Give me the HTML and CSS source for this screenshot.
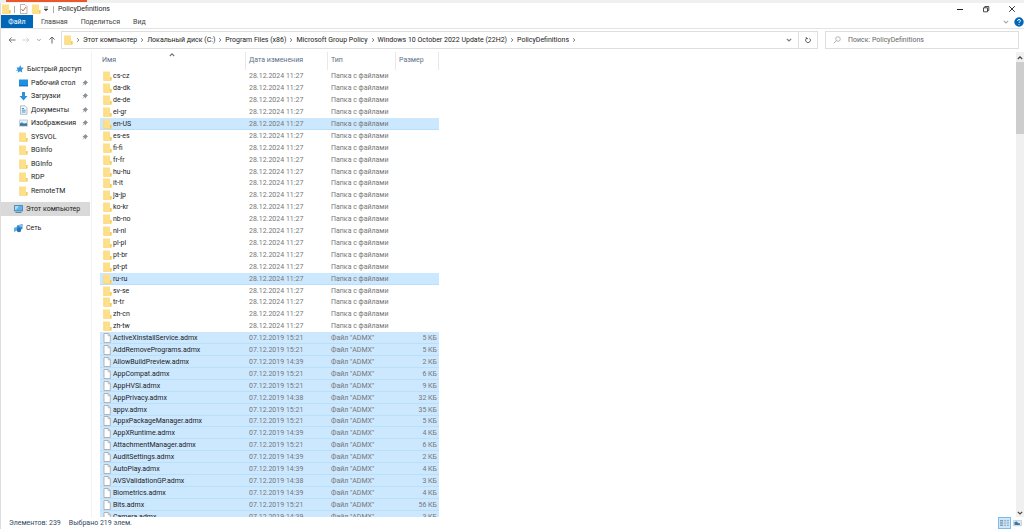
FILE: index.html
```html
<!DOCTYPE html>
<html lang="ru">
<head>
<meta charset="utf-8">
<title>PolicyDefinitions</title>
<link rel="stylesheet" href="styles.css">
</head>
<body>
<svg class="sprite" aria-hidden="true">
  <symbol id="folder" viewBox="0 0 9 10"><path d="M0.5 0.5H7V6H8.5V9.5H0.5Z" fill="#ffe08a"/><path d="M7 6H8.5V9.5H0.5V9H7Z" fill="#f3cb5c"/><path d="M0.5 0.5H1.2V9.5H0.5Z" fill="#f7d475"/></symbol>
  <symbol id="file" viewBox="0 0 9 10"><path d="M1 0.5H5.3L7.3 2.5V9.5H1Z" fill="#fff" stroke="#96999c" stroke-width=".7"/><path d="M5.1 0.6V2.7H7.2" fill="none" stroke="#96999c" stroke-width=".6"/></symbol>
  <symbol id="pin" viewBox="0 0 8 8"><path d="M4.2 1L7 3.6 6.2 4 5 5.6 4.8 6.4 3.3 5 1 7.2 2.9 4.6 1.4 3.2 2.4 3 3.9 1.8Z" fill="#8c9299"/></symbol>
  <symbol id="chev" viewBox="0 0 6 6"><path d="M2 1.2L4 3 2 4.8" fill="none" stroke="#777" stroke-width=".9"/></symbol>
  <symbol id="down" viewBox="0 0 8 8"><path d="M1.8 2.8L4 5 6.2 2.8" fill="none" stroke="currentColor" stroke-width="1.1"/></symbol>
  <symbol id="up" viewBox="0 0 8 8"><path d="M1.8 5L4 2.8 6.2 5" fill="none" stroke="currentColor" stroke-width="1.1"/></symbol>
</svg>
<div class="strip"><span class="strip-mark"></span></div>
<div class="window">
  <header class="titlebar">
    <svg class="ico"><use href="#folder"/></svg>
    <span class="tick"></span>
    <button class="plain quick" aria-label="Свойства"><svg class="ico" viewBox="0 0 9 10"><path d="M1.5 .5H6L8 2.5V9.5H1.5Z" fill="#fff" stroke="#999" stroke-width=".7"/><path d="M2.5 5L4 7 7 3" fill="none" stroke="#e8603c" stroke-width="1"/></svg></button>
    <button class="plain quick" aria-label="Новая папка"><svg class="ico"><use href="#folder"/></svg></button>
    <button class="plain more" aria-label="Настройка панели"><svg class="small" viewBox="0 0 8 8"><path d="M2 2H6M2 4H6L4 6Z" fill="#444" stroke="#444" stroke-width=".6"/></svg></button>
    <span class="tick"></span>
    <h1 class="title">PolicyDefinitions</h1>
    <div class="controls">
      <button class="plain" aria-label="Свернуть"><svg class="small" viewBox="0 0 8 8"><path d="M1 4.5H7" stroke="#222" stroke-width="1"/></svg></button>
      <button class="plain" aria-label="Восстановить"><svg class="small" viewBox="0 0 8 8"><path d="M1.5 2.8H5.5V6.8H1.5ZM2.8 2.8V1.5H6.8V5.5H5.5" fill="none" stroke="#222" stroke-width=".8"/></svg></button>
      <button class="plain" aria-label="Закрыть"><svg class="small" viewBox="0 0 8 8"><path d="M1.2 1.2L6.8 6.8M6.8 1.2L1.2 6.8" stroke="#222" stroke-width=".9"/></svg></button>
    </div>
  </header>
  <nav class="tabs">
    <button class="tab tab-file">Файл</button>
    <button class="tab">Главная</button>
    <button class="tab">Поделиться</button>
    <button class="tab">Вид</button>
    <div class="help">
      <button class="plain faint" aria-label="Развернуть ленту"><svg class="small"><use href="#down"/></svg></button>
      <button class="plain" aria-label="Справка"><svg class="ico-help" viewBox="0 0 10 10"><circle cx="5" cy="5" r="4.7" fill="#0067b8"/><path d="M3.5 3.9C3.5 2 6.5 2 6.5 3.9C6.5 4.8 5 4.9 5 6M5 7V7.8" fill="none" stroke="#fff" stroke-width="1"/></svg></button>
    </div>
  </nav>
  <div class="address-row">
    <div class="arrows">
      <button class="plain" aria-label="Назад"><svg class="small" viewBox="0 0 8 8"><path d="M7.5 4H1M3.6 1.4L1 4 3.6 6.6" fill="none" stroke="#666" stroke-width=".9"/></svg></button>
      <button class="plain" aria-label="Вперёд"><svg class="small" viewBox="0 0 8 8"><path d="M.5 4H7M4.4 1.4L7 4 4.4 6.6" fill="none" stroke="#ccc" stroke-width=".9"/></svg></button>
      <button class="plain" aria-label="Последние"><svg class="tiny"><use href="#down"/></svg></button>
      <button class="plain" aria-label="Вверх"><svg class="small" viewBox="0 0 8 8"><path d="M4 7.5V1M1.4 3.6L4 1 6.6 3.6" fill="none" stroke="#666" stroke-width="1"/></svg></button>
    </div>
    <div class="address">
      <svg class="ico"><use href="#folder"/></svg>
      <svg class="sep"><use href="#chev"/></svg><a href="#">Этот компьютер</a>
      <svg class="sep"><use href="#chev"/></svg><a href="#">Локальный диск (C:)</a>
      <svg class="sep"><use href="#chev"/></svg><a href="#">Program Files (x86)</a>
      <svg class="sep"><use href="#chev"/></svg><a href="#">Microsoft Group Policy</a>
      <svg class="sep"><use href="#chev"/></svg><a href="#">Windows 10 October 2022 Update (22H2)</a>
      <svg class="sep"><use href="#chev"/></svg><a href="#">PolicyDefinitions</a>
      <svg class="sep"><use href="#chev"/></svg>
      <button class="plain drop" aria-label="Предыдущие расположения"><svg class="small"><use href="#down"/></svg></button>
      <button class="plain refresh" aria-label="Обновить"><svg class="small" viewBox="0 0 8 8"><path d="M5.6 2.4A2.4 2.4 0 1 1 2.6 2.3M2.2 1V2.6H4" fill="none" stroke="#555" stroke-width=".9"/></svg></button>
    </div>
    <label class="search">
      <svg class="small" viewBox="0 0 8 8"><circle cx="5" cy="3" r="2.3" fill="none" stroke="#999" stroke-width=".7"/><path d="M3.3 4.7L.8 7.2" stroke="#999" stroke-width=".8"/></svg>
      <input type="search" placeholder="Поиск: PolicyDefinitions" aria-label="Поиск: PolicyDefinitions">
    </label>
  </div>
  <div class="body">
    <nav class="side">
      <ul class="tree">
        <li class="root"><svg class="ico" viewBox="0 0 9 10"><path d="M5.2 1L6.2 3.4 8.8 3.8 6.8 5.8 7.2 8.6 5 7.2 2.6 8.8 3.2 6.6 .4 7 2.6 5.4 1.6 3.6 4.2 3.4Z" fill="#2f93dc"/></svg><a href="#">Быстрый доступ</a></li>
        <li><svg class="ico" viewBox="0 0 9 10"><path d="M0 1.5H9V8H0Z" fill="#1e90e4"/><path d="M0 7.4H9V8.4H0Z" fill="#0d64b0"/></svg><a href="#">Рабочий стол</a><svg class="pin"><use href="#pin"/></svg></li>
        <li><svg class="ico" viewBox="0 0 9 10"><path d="M3 1H6V5H8.5L4.5 9.5.5 5H3Z" fill="#2e8fdb"/></svg><a href="#">Загрузки</a><svg class="pin"><use href="#pin"/></svg></li>
        <li><svg class="ico" viewBox="0 0 9 10"><path d="M1.5.8H6L8 2.8V9.3H1.5Z" fill="#f4f8fb" stroke="#93a5b3" stroke-width=".7"/><path d="M2.8 3.5H5M2.8 5.2H6.6M2.8 7H6.6" stroke="#428fcb" stroke-width="1"/></svg><a href="#">Документы</a><svg class="pin"><use href="#pin"/></svg></li>
        <li><svg class="ico" viewBox="0 0 9 10"><path d="M.4 2H8.6V8.2H.4Z" fill="#e5f1f9" stroke="#a2afb8" stroke-width=".6"/><path d="M1 5L3 4.3 5 5.4 8 4.8V7.5H1Z" fill="#4d8fbd"/><path d="M1 6.4H8V7.6H1Z" fill="#315f84"/></svg><a href="#">Изображения</a><svg class="pin"><use href="#pin"/></svg></li>
        <li><svg class="ico"><use href="#folder"/></svg><a href="#">SYSVOL</a><svg class="pin"><use href="#pin"/></svg></li>
        <li><svg class="ico"><use href="#folder"/></svg><a href="#">BGInfo</a></li>
        <li><svg class="ico"><use href="#folder"/></svg><a href="#">BGInfo</a></li>
        <li><svg class="ico"><use href="#folder"/></svg><a href="#">RDP</a></li>
        <li><svg class="ico"><use href="#folder"/></svg><a href="#">RemoteTM</a></li>
      </ul>
      <ul class="tree places">
        <li class="place current"><svg class="ico" viewBox="0 0 9 10"><path d="M.4 1.5H8.6V7H.4Z" fill="#55b5f0" stroke="#3c6f96" stroke-width=".7"/><path d="M1 2L5 2 2 6H1Z" fill="#a7dcfb"/><path d="M1.5 8.5H7.5" stroke="#5d7c94" stroke-width=".9"/></svg><a href="#">Этот компьютер</a></li>
        <li class="place"><svg class="ico" viewBox="0 0 9 10"><path d="M0 5L4 3V7L0 9Z" fill="#5aaee8"/><path d="M3 2.5L8.5 1V6L3 7.5Z" fill="#3c8fce"/><circle cx="5" cy="7" r="2.2" fill="#2a71ae"/><path d="M4 2.8L7.8 1.8V4Z" fill="#8fd0f7"/></svg><a href="#">Сеть</a></li>
      </ul>
    </nav>
    <main class="content">
      <svg class="sort"><use href="#up"/></svg>
      <table class="files">
        <colgroup><col class="c-name"><col class="c-date"><col class="c-type"><col class="c-size"></colgroup>
        <thead><tr><th>Имя</th><th>Дата изменения</th><th>Тип</th><th>Размер</th></tr></thead>
        <tbody>
          <tr><td><svg class="ico"><use href="#folder"/></svg>cs-cz</td><td>28.12.2024 11:27</td><td>Папка с файлами</td><td></td></tr>
          <tr><td><svg class="ico"><use href="#folder"/></svg>da-dk</td><td>28.12.2024 11:27</td><td>Папка с файлами</td><td></td></tr>
          <tr><td><svg class="ico"><use href="#folder"/></svg>de-de</td><td>28.12.2024 11:27</td><td>Папка с файлами</td><td></td></tr>
          <tr><td><svg class="ico"><use href="#folder"/></svg>el-gr</td><td>28.12.2024 11:27</td><td>Папка с файлами</td><td></td></tr>
          <tr class="sel"><td><svg class="ico"><use href="#folder"/></svg>en-US</td><td>28.12.2024 11:27</td><td>Папка с файлами</td><td></td></tr>
          <tr><td><svg class="ico"><use href="#folder"/></svg>es-es</td><td>28.12.2024 11:27</td><td>Папка с файлами</td><td></td></tr>
          <tr><td><svg class="ico"><use href="#folder"/></svg>fi-fi</td><td>28.12.2024 11:27</td><td>Папка с файлами</td><td></td></tr>
          <tr><td><svg class="ico"><use href="#folder"/></svg>fr-fr</td><td>28.12.2024 11:27</td><td>Папка с файлами</td><td></td></tr>
          <tr><td><svg class="ico"><use href="#folder"/></svg>hu-hu</td><td>28.12.2024 11:27</td><td>Папка с файлами</td><td></td></tr>
          <tr><td><svg class="ico"><use href="#folder"/></svg>it-it</td><td>28.12.2024 11:27</td><td>Папка с файлами</td><td></td></tr>
          <tr><td><svg class="ico"><use href="#folder"/></svg>ja-jp</td><td>28.12.2024 11:27</td><td>Папка с файлами</td><td></td></tr>
          <tr><td><svg class="ico"><use href="#folder"/></svg>ko-kr</td><td>28.12.2024 11:27</td><td>Папка с файлами</td><td></td></tr>
          <tr><td><svg class="ico"><use href="#folder"/></svg>nb-no</td><td>28.12.2024 11:27</td><td>Папка с файлами</td><td></td></tr>
          <tr><td><svg class="ico"><use href="#folder"/></svg>nl-nl</td><td>28.12.2024 11:27</td><td>Папка с файлами</td><td></td></tr>
          <tr><td><svg class="ico"><use href="#folder"/></svg>pl-pl</td><td>28.12.2024 11:27</td><td>Папка с файлами</td><td></td></tr>
          <tr><td><svg class="ico"><use href="#folder"/></svg>pt-br</td><td>28.12.2024 11:27</td><td>Папка с файлами</td><td></td></tr>
          <tr><td><svg class="ico"><use href="#folder"/></svg>pt-pt</td><td>28.12.2024 11:27</td><td>Папка с файлами</td><td></td></tr>
          <tr class="sel"><td><svg class="ico"><use href="#folder"/></svg>ru-ru</td><td>28.12.2024 11:27</td><td>Папка с файлами</td><td></td></tr>
          <tr><td><svg class="ico"><use href="#folder"/></svg>sv-se</td><td>28.12.2024 11:27</td><td>Папка с файлами</td><td></td></tr>
          <tr><td><svg class="ico"><use href="#folder"/></svg>tr-tr</td><td>28.12.2024 11:27</td><td>Папка с файлами</td><td></td></tr>
          <tr><td><svg class="ico"><use href="#folder"/></svg>zh-cn</td><td>28.12.2024 11:27</td><td>Папка с файлами</td><td></td></tr>
          <tr><td><svg class="ico"><use href="#folder"/></svg>zh-tw</td><td>28.12.2024 11:27</td><td>Папка с файлами</td><td></td></tr>
          <tr class="sel"><td><svg class="ico"><use href="#file"/></svg>ActiveXInstallService.admx</td><td>07.12.2019 15:21</td><td>Файл "ADMX"</td><td>5 КБ</td></tr>
          <tr class="sel"><td><svg class="ico"><use href="#file"/></svg>AddRemovePrograms.admx</td><td>07.12.2019 15:21</td><td>Файл "ADMX"</td><td>5 КБ</td></tr>
          <tr class="sel"><td><svg class="ico"><use href="#file"/></svg>AllowBuildPreview.admx</td><td>07.12.2019 14:39</td><td>Файл "ADMX"</td><td>2 КБ</td></tr>
          <tr class="sel"><td><svg class="ico"><use href="#file"/></svg>AppCompat.admx</td><td>07.12.2019 15:21</td><td>Файл "ADMX"</td><td>6 КБ</td></tr>
          <tr class="sel"><td><svg class="ico"><use href="#file"/></svg>AppHVSI.admx</td><td>07.12.2019 15:21</td><td>Файл "ADMX"</td><td>9 КБ</td></tr>
          <tr class="sel"><td><svg class="ico"><use href="#file"/></svg>AppPrivacy.admx</td><td>07.12.2019 14:38</td><td>Файл "ADMX"</td><td>32 КБ</td></tr>
          <tr class="sel"><td><svg class="ico"><use href="#file"/></svg>appv.admx</td><td>07.12.2019 15:21</td><td>Файл "ADMX"</td><td>35 КБ</td></tr>
          <tr class="sel"><td><svg class="ico"><use href="#file"/></svg>AppxPackageManager.admx</td><td>07.12.2019 15:21</td><td>Файл "ADMX"</td><td>5 КБ</td></tr>
          <tr class="sel"><td><svg class="ico"><use href="#file"/></svg>AppXRuntime.admx</td><td>07.12.2019 14:39</td><td>Файл "ADMX"</td><td>4 КБ</td></tr>
          <tr class="sel"><td><svg class="ico"><use href="#file"/></svg>AttachmentManager.admx</td><td>07.12.2019 15:21</td><td>Файл "ADMX"</td><td>6 КБ</td></tr>
          <tr class="sel"><td><svg class="ico"><use href="#file"/></svg>AuditSettings.admx</td><td>07.12.2019 14:39</td><td>Файл "ADMX"</td><td>2 КБ</td></tr>
          <tr class="sel"><td><svg class="ico"><use href="#file"/></svg>AutoPlay.admx</td><td>07.12.2019 14:39</td><td>Файл "ADMX"</td><td>4 КБ</td></tr>
          <tr class="sel"><td><svg class="ico"><use href="#file"/></svg>AVSValidationGP.admx</td><td>07.12.2019 14:38</td><td>Файл "ADMX"</td><td>3 КБ</td></tr>
          <tr class="sel"><td><svg class="ico"><use href="#file"/></svg>Biometrics.admx</td><td>07.12.2019 14:39</td><td>Файл "ADMX"</td><td>4 КБ</td></tr>
          <tr class="sel"><td><svg class="ico"><use href="#file"/></svg>Bits.admx</td><td>07.12.2019 15:21</td><td>Файл "ADMX"</td><td>56 КБ</td></tr>
          <tr class="sel"><td><svg class="ico"><use href="#file"/></svg>Camera.admx</td><td>07.12.2019 14:39</td><td>Файл "ADMX"</td><td>3 КБ</td></tr>
        </tbody>
      </table>
    </main>
    <div class="scrollbar">
      <svg class="small"><use href="#up"/></svg>
      <div class="track"><div class="thumb"></div></div>
      <svg class="small"><use href="#down"/></svg>
    </div>
  </div>
  <footer class="status">
    <span>Элементов: 239</span>
    <span>Выбрано 219 элем.</span>
    <div class="views">
      <button class="plain view active" aria-label="Таблица"><svg class="ico" viewBox="0 0 10 10"><path d="M0 2.5H3.5M0 5H3.5M0 7.5H3.5" stroke="#8b9ba6" stroke-width="1.4"/><path d="M4.5 2.5H6.8M7.6 2.5H10M4.5 5H6.8M7.6 5H10M4.5 7.5H6.8M7.6 7.5H10" stroke="#718797" stroke-width=".8"/></svg></button>
      <button class="plain view" aria-label="Крупные значки"><svg class="ico" viewBox="0 0 9 10"><path d="M.5 2.5H8.5V7.8H.5Z" fill="#d7ebf8" stroke="#b5c0c8" stroke-width=".6"/><path d="M1.5 4L4 3.6 5 5 7 5.4V7H1.5Z" fill="#41759d"/></svg></button>
    </div>
  </footer>
</div>
</body>
</html>
```
FILE: styles.css
```css
* { box-sizing: border-box; }

body {
  margin: 0;
  height: 100vh;
  display: flex;
  flex-direction: column;
  overflow: hidden;
  background: #fff;
  color: #222;
  font: 7px/12px Roboto, "Open Sans", sans-serif;
}

.sprite { position: absolute; width: 0; height: 0; }

.strip { flex: none; height: 3px; background: #f0f0f0; padding-left: 6px; }
.strip-mark { display: block; width: 81px; height: 2px; background: #e8582c; }

.window {
  flex: 1;
  min-height: 0;
  display: flex;
  flex-direction: column;
  border-left: 1px solid #dcdcdc;
}

button, input { font: inherit; color: inherit; }
.plain {
  display: flex;
  align-items: center;
  justify-content: center;
  padding: 0;
  border: 0;
  background: none;
}
a { color: inherit; text-decoration: none; white-space: nowrap; }
svg { flex: none; display: block; }
.ico { width: 9px; height: 10px; }
.small { width: 8px; height: 8px; }
.tiny { width: 6px; height: 6px; }
.ico-help { width: 10px; height: 10px; }

.titlebar { flex: none; height: 12px; display: flex; align-items: center; padding-left: 1px; }
.tick { width: 1px; height: 7px; margin-left: 3px; background: #aaa; }
.quick { margin-left: 4px; }
.quick + .quick { margin-left: 4px; }
.more { margin-left: 1px; }
.title { margin: 0; padding-left: 4px; font-size: 7px; font-weight: 400; color: #222; }
.controls { margin-left: auto; display: flex; gap: 18px; padding-right: 8px; }

.tabs { flex: none; height: 14px; display: flex; border-bottom: 1px solid #e3e3e3; }
.tab { border: 0; padding: 0; margin-left: 13px; background: none; color: #444; }
.tab-file { width: 32px; margin: 0 -5px 0 0; background: #0067b8; color: #fff; }
.help { margin-left: auto; display: flex; gap: 4px; }
.faint { color: #aaa; }

.address-row { flex: none; height: 23px; padding: 2px 5px 3px 7px; display: flex; }
.arrows { display: flex; align-items: center; gap: 6px; width: 53px; color: #888; }
.address { flex: 1; display: flex; align-items: center; border: 1px solid #dedede; padding-left: 2px; }
.sep { width: 6px; height: 6px; margin: 0 2px; }
.drop { margin-left: auto; width: 18px; color: #777; }
.refresh { width: 19px; align-self: stretch; border-left: 1px solid #dedede; }
.search {
  flex: 0 1 194px;
  margin-left: 7px;
  padding-left: 7px;
  display: flex;
  align-items: center;
  gap: 7px;
  border: 1px solid #dedede;
}
.search input { flex: 1; min-width: 0; padding: 0; border: 0; outline: 0; background: none; }
.search input::placeholder { color: #666; opacity: 1; }

.body { flex: 1; min-height: 0; display: flex; }
.side { flex: none; width: 91px; padding-top: 10px; border-right: 1px solid #f2f2f2; }
.tree { margin: 0; padding: 0; list-style: none; }
.tree li { height: 13px; display: flex; align-items: center; gap: 3px; padding-left: 18px; padding-right: 2px; }
.tree li:nth-child(odd) { height: 14px; }
.tree .root { padding-left: 14px; }
.pin { width: 8px; height: 8px; margin-left: auto; }
.places { display: grid; gap: 5px; padding-top: 5px; }
.tree .place { padding-left: 13px; margin-right: 1px; }
.current { background: #d9d9d9; }

.content { flex: 1; min-width: 0; overflow: hidden; position: relative; padding-left: 8px; }
.sort { position: absolute; left: 76px; top: -1px; width: 8px; height: 8px; color: #777; }
.files { width: 339px; table-layout: fixed; border-collapse: separate; border-spacing: 0; color: #777; }
.c-name { width: 146px; }
.c-date { width: 82px; }
.c-type { width: 68px; }
.c-size { width: 43px; }
.files th {
  height: 18px;
  padding: 0 0 2px 3px;
  font-weight: 400;
  text-align: left;
  color: #5d7089;
  border-right: 1px solid #e8e8e8;
}
.files th:first-child { padding-left: 2px; }
.files td { height: 12px; padding: 0 0 0 3px; line-height: 11px; white-space: nowrap; }
.files tr:nth-child(10n) td { height: 11px; }
.files td:first-child { color: #222; }
.files td:last-child { text-align: right; padding-right: 2px; }
.files td .ico { display: inline-block; vertical-align: top; margin-right: 1px; }
.sel { background: #cce8ff; box-shadow: inset 0 -1px #bcdff9; }

.scrollbar { flex: none; width: 8px; display: flex; flex-direction: column; background: #f0f0f0; color: #444; padding-top: 2px; }
.track { flex: 1; }
.thumb { height: 16%; background: #cdcdcd; }

.status { flex: none; height: 12px; display: flex; align-items: center; gap: 8px; padding-left: 8px; color: #33475f; }
.views { margin-left: auto; display: flex; gap: 1px; padding-right: 1px; }
.view { width: 11px; height: 12px; }
.active { width: 13px; border: 1px solid #7abdec; background: #cce8ff; }
```
